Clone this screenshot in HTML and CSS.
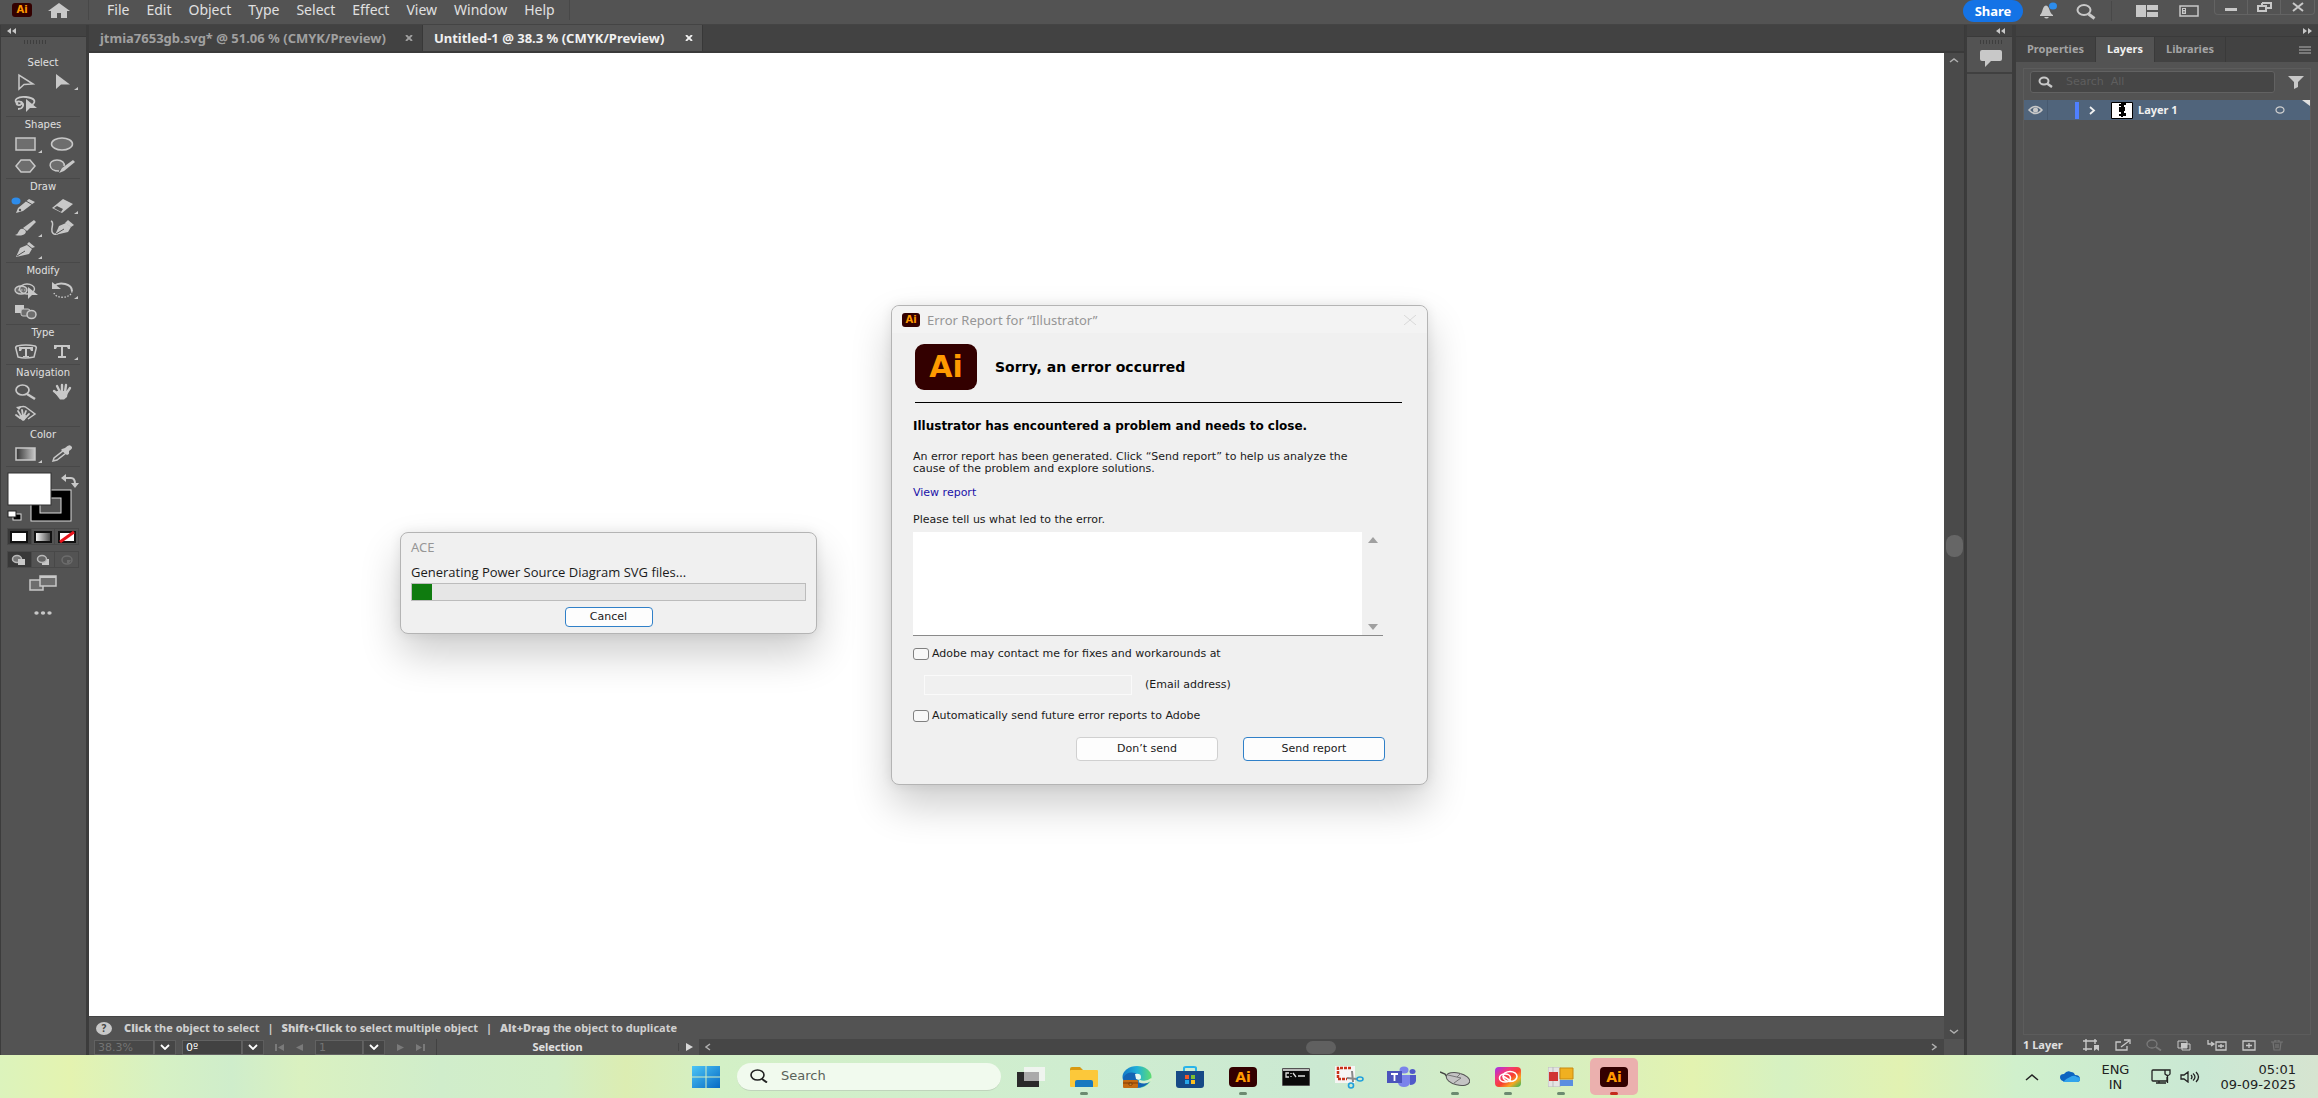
FILE: index.html
```html
<!DOCTYPE html>
<html lang="en">
<head>
<meta charset="utf-8">
<title>Adobe Illustrator</title>
<link rel="stylesheet" href="styles.css">
</head>
<body>
<div class="app">
  <header class="menubar">
    <span class="ai-badge ai-small">Ai</span>
    <button class="icon-btn home" aria-label="Home"><svg width="22" height="15" viewBox="0 0 22 15"><path d="M11 0 0 8h3v7h6v-5h4v5h6V8h3z" fill="#c8c8c8"/></svg></button>
    <nav class="menus">
      <button>File</button><button>Edit</button><button>Object</button><button>Type</button><button>Select</button><button>Effect</button><button>View</button><button>Window</button><button>Help</button>
    </nav>
    <div class="top-actions">
      <button class="share">Share</button>
      <button class="icon-btn" aria-label="Notifications"><svg width="22" height="18" viewBox="0 0 22 18"><path d="M2 13c3-2 2-9 6-9.500C12 4 11 11 15 13v1H2zM6 15h5q-2.500 3-5 0z" fill="#c8c8c8"/><ellipse cx="15" cy="4" rx="4" ry="3.500" fill="#2d8ceb"/></svg></button>
      <button class="icon-btn" aria-label="Search"><svg width="22" height="18" viewBox="0 0 22 18"><ellipse cx="9" cy="8" rx="6.500" ry="5" fill="none" stroke="#c8c8c8" stroke-width="2"/><path d="m13.500 12 6 4.500" stroke="#c8c8c8" stroke-width="3"/></svg></button>
      <span class="bar-line"></span>
      <button class="icon-btn ws" aria-label="Arrange documents"><svg width="22" height="12" viewBox="0 0 22 12"><path d="M0 0h10v12H0zM11 0h11v5H11zM11 7h11v5H11z" fill="#c8c8c8"/></svg></button>
      <button class="icon-btn ws" aria-label="Workspace"><svg width="20" height="12" viewBox="0 0 20 12"><path d="M1 1h18v10H1z" fill="none" stroke="#c8c8c8" stroke-width="1.500"/><path d="M3 3h4v6H3z" fill="#c8c8c8"/><path d="M4 4.500h2M4 7h2" stroke="#535353"/></svg></button>
      <div class="win-buttons">
        <button aria-label="Minimize"><svg width="14" height="10" viewBox="0 0 14 10"><path d="M1 6h12v3H1z" fill="#c8c8c8"/></svg></button>
        <button aria-label="Restore"><svg width="16" height="10" viewBox="0 0 16 10"><path d="M6 1h9v5h-4M6 3V1M2 4h8v5H2z" fill="none" stroke="#c8c8c8" stroke-width="2"/></svg></button>
        <button aria-label="Close"><svg width="14" height="10" viewBox="0 0 14 10"><path d="m2 1 10 8M12 1 2 9" stroke="#c8c8c8" stroke-width="2"/></svg></button>
      </div>
    </div>
  </header>

  <main class="workspace">
    <aside class="toolbar">
      <div class="dock-head"><svg width="10" height="6" viewBox="0 0 10 6"><path d="M4 0v6L0 3zM9 0v6L5 3z" fill="#c8c8c8"/></svg></div>
      <div class="tool-body">
        <div class="grip"></div>
        <section class="tools"><h2>Select</h2><div class="tool-grid">
          <button aria-label="Selection"><svg viewBox="0 0 34 20"><path d="M11 3v14l5-4.500 9-.5z" fill="none" stroke="#c8c8c8" stroke-width="1.500"/></svg></button>
          <button aria-label="Direct selection"><svg viewBox="0 0 34 20"><path d="M11 2v15l5-4.500h9z" fill="#c8c8c8"/><path d="M33 15v3h-4z" fill="#c8c8c8"/></svg></button>
          <button aria-label="Lasso"><svg viewBox="0 0 34 20"><path d="M10 10C4 6 10 2 18 3s11 4 6 8M13 8c-4-2-6 2-3 3s5-3 3-3c4 2 2 7-3 7" fill="none" stroke="#c8c8c8" stroke-width="1.800"/><path d="M18 5v13l4-4h7z" fill="#c8c8c8"/></svg></button>
        </div></section>
        <section class="tools"><h2>Shapes</h2><div class="tool-grid">
          <button aria-label="Rectangle"><svg viewBox="0 0 34 20"><path d="M8 4h19v12H8z" fill="#6e6e6e" stroke="#c8c8c8" stroke-width="1.500"/><path d="M34 16v3h-4z" fill="#c8c8c8"/></svg></button>
          <button aria-label="Ellipse"><svg viewBox="0 0 34 20"><ellipse cx="17" cy="10" rx="10.500" ry="6" fill="#6e6e6e" stroke="#c8c8c8" stroke-width="1.500"/></svg></button>
          <button aria-label="Polygon"><svg viewBox="0 0 34 20"><path d="M13 4h9l5 6-5 6h-9l-5-6z" fill="#6e6e6e" stroke="#c8c8c8" stroke-width="1.500"/></svg></button>
          <button aria-label="Shaper"><svg viewBox="0 0 34 20"><path d="M14 15C3 15 2 4 12 4c5 0 8 3 7 6" fill="#6e6e6e" stroke="#c8c8c8" stroke-width="1.500"/><path d="m14 17 3-5L28 4l2 2-11 9z" fill="#c8c8c8"/></svg></button>
        </div></section>
        <section class="tools"><h2>Draw</h2><div class="tool-grid">
          <button aria-label="Pencil"><svg viewBox="0 0 34 20"><path d="m8 17 2-5 11-9 6 3-12 9z" fill="#c8c8c8"/><path d="m18 5 6 3.500" stroke="#535353"/><circle cx="12" cy="14" r="1.200" fill="#535353"/><ellipse cx="8" cy="5" rx="4.500" ry="3.500" fill="#2d8ceb"/></svg></button>
          <button aria-label="Eraser"><svg viewBox="0 0 34 20"><path d="m7 12 11-9 10 5-11 9z" fill="#c8c8c8"/><path d="m9 12 3-2 6 3-2 3z" fill="#535353"/><path d="M33 15v3h-4z" fill="#c8c8c8"/></svg></button>
          <button aria-label="Paintbrush"><svg viewBox="0 0 34 20"><path d="m15 10 11-8 2 2-9 9z" fill="#c8c8c8"/><path d="M7 17q3-1 4-4 2-4 6-1c3 3-2 7-10 5z" fill="#c8c8c8"/><path d="M34 16v3h-4z" fill="#c8c8c8"/></svg></button>
          <button aria-label="Curvature"><svg viewBox="0 0 34 20"><path d="M6 3c5 2-3 10 3 13q3 1 4-1" fill="none" stroke="#c8c8c8" stroke-width="1.500"/><path d="m10 17 4-9 7-3 5 4-3 5z" fill="#c8c8c8"/><path d="m23 2 6 5-3 2-6-4z" fill="#c8c8c8"/><path d="m11 16 8-5" stroke="#535353"/></svg></button>
          <button aria-label="Pen"><svg viewBox="0 0 34 20"><path d="m8 17 4-9 7-3 5 4-3 5z" fill="#c8c8c8"/><path d="m21 2 6 5-3 1-5-4z" fill="#c8c8c8"/><path d="m9 16 8-5" stroke="#535353"/><path d="M34 16v3h-4z" fill="#c8c8c8"/></svg></button>
        </div></section>
        <section class="tools"><h2>Modify</h2><div class="tool-grid">
          <button aria-label="Shape builder"><svg viewBox="0 0 34 20"><ellipse cx="13" cy="10" rx="6" ry="4" fill="#6e6e6e" stroke="#c8c8c8" stroke-width="1.400"/><ellipse cx="19" cy="9" rx="7.500" ry="5" fill="none" stroke="#c8c8c8" stroke-width="1.400"/><path d="M10 10h9" stroke="#c8c8c8" stroke-dasharray="1.500"/><path d="M20 7v12l4-4h6z" fill="#c8c8c8"/></svg></button>
          <button aria-label="Rotate"><svg viewBox="0 0 34 20"><path d="M9 6c6-5 18-2 18 5" fill="none" stroke="#c8c8c8" stroke-width="2"/><path d="M7 2v7h9z" fill="#c8c8c8"/><path d="M27 11c-1 8-16 8-18 2" fill="none" stroke="#c8c8c8" stroke-width="1.400" stroke-dasharray="1.500"/><path d="M33 16v3h-4z" fill="#c8c8c8"/></svg></button>
          <button aria-label="Blend"><svg viewBox="0 0 34 20"><path d="M7 3h9v8H7z" fill="#c8c8c8"/><rect x="13" y="7" width="9" height="7" rx="2" fill="#6e6e6e" stroke="#c8c8c8"/><ellipse cx="23.500" cy="12.500" rx="4.500" ry="4" fill="#6e6e6e" stroke="#c8c8c8" stroke-width="1.500"/></svg></button>
        </div></section>
        <section class="tools"><h2>Type</h2><div class="tool-grid">
          <button aria-label="Touch type"><svg viewBox="0 0 34 20"><path d="M9 4q9-2 18 0 2 1 1 3l-2 8q-9 2-16 0L8 7q-1-2 1-3z" fill="none" stroke="#c8c8c8" stroke-width="1.500"/><path d="M11 5h14v4h-2l-1-2h-3v7h2v1h-6v-1h2V7h-3l-1 2h-2z" fill="#c8c8c8"/></svg></button>
          <button aria-label="Type"><svg viewBox="0 0 34 20"><path d="M9 3h16v4h-2l-1-2h-4v9h3v2h-8v-2h3V5h-4l-1 2H9z" fill="#c8c8c8"/><path d="M33 15v3h-4z" fill="#c8c8c8"/></svg></button>
        </div></section>
        <section class="tools"><h2>Navigation</h2><div class="tool-grid">
          <button aria-label="Zoom"><svg viewBox="0 0 34 20"><ellipse cx="14.500" cy="8" rx="6.500" ry="5" fill="none" stroke="#c8c8c8" stroke-width="1.700"/><path d="m19 12 8 5" stroke="#c8c8c8" stroke-width="2.500"/></svg></button>
          <button aria-label="Hand"><svg viewBox="0 0 34 20"><path d="m9 9 5 4M12 4l3 6M17 3v7M21 3l-1 7M25 6l-4 6" stroke="#c8c8c8" stroke-width="2.400" stroke-linecap="round"/><path d="M12 9h11l-1 6-3 2.500h-4L10 11z" fill="#c8c8c8"/></svg></button>
          <button aria-label="Rotate view"><svg viewBox="0 0 34 20"><path d="m8 11 4 3M10 7l3 5M14 6l1 6M18 7l-2 5M21 10l-4 4" stroke="#c8c8c8" stroke-width="1.800" stroke-linecap="round"/><path d="M12 11h6l-1 5-2 1-4-3zM8 3l6-1-3 4z" fill="#c8c8c8"/><path d="M10 4q6-3 9 0l8 6-7 5" fill="none" stroke="#c8c8c8" stroke-width="1.500"/></svg></button>
        </div></section>
        <section class="tools"><h2>Color</h2><div class="tool-grid">
          <button aria-label="Gradient"><svg viewBox="0 0 34 20"><defs><linearGradient id="g1"><stop stop-color="#333"/><stop offset="1" stop-color="#c8c8c8"/></linearGradient></defs><path d="M8 4h19v12H8z" fill="url(#g1)" stroke="#c8c8c8" stroke-width="1.500"/><path d="M34 16v3h-4z" fill="#c8c8c8"/></svg></button>
          <button aria-label="Eyedropper"><svg viewBox="0 0 34 20"><path d="m8 17 1-3 9-7 3 2-9 7z" fill="none" stroke="#c8c8c8" stroke-width="1.500"/><path d="m17 5 3-1q4-4 6-2 3 2-2 5v3l-2 1-6-5z" fill="#c8c8c8"/></svg></button>
        </div></section>
        <section class="swatches">
          <svg width="74" height="52" viewBox="0 0 74 52"><rect x="24" y="18" width="40" height="31" fill="#000" stroke="#ddd"/><rect x="33" y="26" width="21" height="15" fill="#535353" stroke="#ddd"/><rect x="1" y="1" width="43" height="32" fill="#fff" stroke="#333"/><path d="M58 6h6q4 0 4 6" fill="none" stroke="#c8c8c8" stroke-width="2"/><path d="M54 6l5-4v8zM64 11h8l-4 5z" fill="#c8c8c8"/><rect x="6" y="42" width="8" height="6" fill="#000" stroke="#ddd"/><rect x="1" y="39" width="8" height="6" fill="#fff" stroke="#222"/></svg>
        </section>
        <div class="seg">
          <button class="on" aria-label="Color"><svg width="18" height="12" viewBox="0 0 18 12"><path d="M1 1h16v10H1z" fill="#fff" stroke="#111" stroke-width="2"/></svg></button>
          <button aria-label="Gradient fill"><svg width="18" height="12" viewBox="0 0 18 12"><defs><linearGradient id="g2"><stop stop-color="#fff"/><stop offset="1" stop-color="#444"/></linearGradient></defs><path d="M1 1h16v10H1z" fill="url(#g2)" stroke="#111" stroke-width="2"/></svg></button>
          <button aria-label="None"><svg width="18" height="12" viewBox="0 0 18 12"><path d="M1 1h16v10H1z" fill="#fff" stroke="#111" stroke-width="2"/><path d="M2 11 16 1" stroke="#e8141c" stroke-width="3"/></svg></button>
        </div>
        <div class="seg">
          <button class="on" aria-label="Draw normal"><svg width="16" height="12" viewBox="0 0 16 12"><ellipse cx="6" cy="5" rx="4.500" ry="3.500" fill="#777" stroke="#b8b8b8" stroke-width="1.500"/><path d="M7 5h7v6H7z" fill="#c8c8c8"/></svg></button>
          <button aria-label="Draw behind"><svg width="16" height="12" viewBox="0 0 16 12"><path d="M7 5h7v6H7z" fill="#c8c8c8"/><ellipse cx="7" cy="5" rx="4.500" ry="3.500" fill="#666" stroke="#b8b8b8" stroke-width="1.500"/></svg></button>
          <button aria-label="Draw inside"><svg width="16" height="12" viewBox="0 0 16 12"><ellipse cx="8" cy="6" rx="5" ry="4" fill="none" stroke="#6c6c6c" stroke-width="1.500"/><path d="M8 6h4l-2 3H8z" fill="#6c6c6c"/></svg></button>
        </div>
        <button class="icon-btn screen-mode" aria-label="Screen mode"><svg width="28" height="16" viewBox="0 0 28 16"><path d="M1 5h13v10H1z" fill="#6e6e6e" stroke="#c8c8c8" stroke-width="1.500"/><path d="M11 1h16v10H11z" fill="#6e6e6e" stroke="#c8c8c8" stroke-width="1.500"/><path d="M11 2h16" stroke="#c8c8c8" stroke-width="2"/></svg></button>
        <button class="icon-btn more" aria-label="Edit toolbar"><svg width="18" height="4" viewBox="0 0 18 4"><g fill="#c8c8c8"><ellipse cx="2.500" cy="2" rx="2.200" ry="1.700"/><ellipse cx="9" cy="2" rx="2.200" ry="1.700"/><ellipse cx="15.500" cy="2" rx="2.200" ry="1.700"/></g></svg></button>
      </div>
    </aside>

    <section class="document">
      <div class="tabs">
        <div class="tab"><span>jtmia7653gb.svg* @ 51.06 % (CMYK/Preview)</span><button aria-label="Close tab"><svg width="8" height="6" viewBox="0 0 8 6"><path d="m1 0 6 6M7 0 1 6" stroke="currentColor" stroke-width="1.800"/></svg></button></div>
        <div class="tab active"><span>Untitled-1 @ 38.3 % (CMYK/Preview)</span><button aria-label="Close tab"><svg width="8" height="6" viewBox="0 0 8 6"><path d="m1 0 6 6M7 0 1 6" stroke="currentColor" stroke-width="1.800"/></svg></button></div>
      </div>
      <div class="doc-body">
        <div class="canvas">
          <section class="dialog ace">
            <h1>ACE</h1>
            <p>Generating Power Source Diagram SVG files...</p>
            <div class="progress" role="progressbar" aria-label="Generating" aria-valuenow="5"><div class="progress-fill" style="width:5%"></div></div>
            <button class="btn primary cancel">Cancel</button>
          </section>
          <section class="dialog report">
            <div class="title"><span class="ai-badge ai-mini">Ai</span><h1>Error Report for “Illustrator”</h1><button class="icon-btn" aria-label="Close"><svg width="14" height="10" viewBox="0 0 14 10"><path d="m1 0 12 10M13 0 1 10" stroke="#d8d8d8"/></svg></button></div>
            <div class="report-body">
              <div class="report-head"><span class="ai-badge ai-large">Ai</span><h2>Sorry, an error occurred</h2></div>
              <h3>Illustrator has encountered a problem and needs to close.</h3>
              <p>An error report has been generated. Click “Send report” to help us analyze the<br>cause of the problem and explore solutions.</p>
              <a href="#report">View report</a>
              <label class="area-label" for="cause">Please tell us what led to the error.</label>
              <div class="area"><textarea id="cause"></textarea><div class="area-bar"><svg width="10" height="6" viewBox="0 0 10 6"><path d="M5 0l5 6H0z" fill="#a0a0a0"/></svg><svg width="10" height="6" viewBox="0 0 10 6"><path d="M5 6l5-6H0z" fill="#a0a0a0"/></svg></div></div>
              <div class="check"><input type="checkbox" id="contact"><label for="contact">Adobe may contact me for fixes and workarounds at</label></div>
              <div class="email"><input type="text" id="email" disabled><label for="email">(Email address)</label></div>
              <div class="check"><input type="checkbox" id="auto"><label for="auto">Automatically send future error reports to Adobe</label></div>
              <div class="actions"><button class="btn">Don’t send</button><button class="btn primary">Send report</button></div>
            </div>
          </section>
        </div>
        <div class="vscroll">
          <svg width="10" height="5" viewBox="0 0 10 5"><path d="m1 4 4-3 4 3" fill="none" stroke="#b0b0b0" stroke-width="1.500"/></svg>
          <span class="vthumb"></span>
          <svg width="10" height="5" viewBox="0 0 10 5"><path d="m1 1 4 3 4-3" fill="none" stroke="#b0b0b0" stroke-width="1.500"/></svg>
        </div>
        <div class="hint"><span class="help">?</span><span><b>Click</b> the object to select</span><i>|</i><span><b>Shift+Click</b> to select multiple object</span><i>|</i><span><b>Alt+Drag</b> the object to duplicate</span></div>
      </div>
      <div class="docbar">
        <input class="field w-zoom" type="text" value="38.3%" aria-label="Zoom" disabled>
        <button class="drop" aria-label="Zoom levels"><svg width="10" height="6" viewBox="0 0 10 6"><path d="m1 1 4 4 4-4" fill="none" stroke="#fff" stroke-width="1.800"/></svg></button>
        <input class="field w-zoom lit" type="text" value="0º" aria-label="Rotation">
        <button class="drop" aria-label="Rotation angles"><svg width="10" height="6" viewBox="0 0 10 6"><path d="m1 1 4 4 4-4" fill="none" stroke="#fff" stroke-width="1.800"/></svg></button>
        <span class="nav"><svg width="10" height="7" viewBox="0 0 10 7"><path d="M0 0h2v7H0zM9 0v7L3 3.500z" fill="#7a7a7a"/></svg><svg width="8" height="7" viewBox="0 0 8 7"><path d="M7 0v7L0 3.500z" fill="#7a7a7a"/></svg></span>
        <input class="field w-board" type="text" value="1" aria-label="Artboard" disabled>
        <button class="drop" aria-label="Artboards"><svg width="10" height="6" viewBox="0 0 10 6"><path d="m1 1 4 4 4-4" fill="none" stroke="#fff" stroke-width="1.800"/></svg></button>
        <span class="nav"><svg width="8" height="7" viewBox="0 0 8 7"><path d="M1 0v7l7-3.500z" fill="#7a7a7a"/></svg><svg width="10" height="7" viewBox="0 0 10 7"><path d="M8 0h2v7H8zM1 0v7l6-3.500z" fill="#7a7a7a"/></svg></span>
        <span class="mode">Selection</span>
        <button class="play" aria-label="Status options"><svg width="7" height="8" viewBox="0 0 7 8"><path d="M0 0v8l7-4z" fill="#d8d8d8"/></svg></button>
        <div class="hscroll">
          <svg width="6" height="8" viewBox="0 0 6 8"><path d="M5 1 1 4l4 3" fill="none" stroke="#b0b0b0" stroke-width="1.500"/></svg>
          <span class="hthumb"></span>
          <svg width="6" height="8" viewBox="0 0 6 8"><path d="m1 1 4 3-4 3" fill="none" stroke="#b0b0b0" stroke-width="1.500"/></svg>
        </div>
      </div>
    </section>

    <aside class="dock">
      <div class="dock-head end"><svg width="10" height="6" viewBox="0 0 10 6"><path d="M4 0v6L0 3zM9 0v6L5 3z" fill="#c8c8c8"/></svg></div>
      <div class="dock-item"><div class="grip"></div><button class="icon-btn" aria-label="Comments"><svg width="22" height="17" viewBox="0 0 22 17"><path d="M2 0h18q2 0 2 2v7q0 2-2 2h-9l-6 6v-6H2q-2 0-2-2V2q0-2 2-2z" fill="#c8c8c8"/></svg></button></div>
    </aside>

    <aside class="panel">
      <div class="dock-head end"><svg width="10" height="6" viewBox="0 0 10 6"><path d="M1 0v6l4-3zM6 0v6l4-3z" fill="#c8c8c8"/></svg></div>
      <div class="panel-tabs"><button>Properties</button><button class="active">Layers</button><button>Libraries</button><button class="burger" aria-label="Panel menu"><svg width="12" height="8" viewBox="0 0 12 8"><path d="M0 1h12M0 4h12M0 7h12" stroke="#b4b4b4"/></svg></button></div>
      <div class="layers">
        <div class="layer-search"><div class="search-box"><svg width="16" height="12" viewBox="0 0 16 12"><ellipse cx="6" cy="5" rx="4.500" ry="3.500" fill="none" stroke="#c8c8c8" stroke-width="2"/><path d="m9 7.500 5 3.500" stroke="#c8c8c8" stroke-width="2.500"/></svg><input type="text" placeholder="Search  All" aria-label="Search layers"></div><button class="icon-btn" aria-label="Filter"><svg width="16" height="13" viewBox="0 0 16 13"><path d="M0 0h16L10 6v5l-4 2V6z" fill="#c8c8c8"/></svg></button></div>
        <div class="layer-row">
          <svg class="eye" width="15" height="10" viewBox="0 0 15 10"><path d="M1 5q6.500-7 13 0-6.500 7-13 0z" fill="none" stroke="#c8c8c8" stroke-width="1.600"/><circle cx="7.500" cy="5" r="2.500" fill="#c8c8c8"/></svg>
          <span class="lock"></span><span class="color-bar"></span>
          <svg class="chev" width="7" height="9" viewBox="0 0 7 9"><path d="m1 1 4 3.500L1 8" fill="none" stroke="#f0f0f0" stroke-width="1.800"/></svg>
          <svg class="thumb" width="22" height="17" viewBox="0 0 22 17"><path d="M.5.500h21v16H.5z" fill="#fff" stroke="#000"/><path d="M10 1h5v2h-2v2h1v4h-1v2h2v3h-3v1h-2v-1H8v-2h2v-2H8V5h2V4H8V2h2z" fill="#000"/></svg>
          <span class="layer-name">Layer 1</span>
          <svg class="target" width="10" height="8" viewBox="0 0 10 8"><ellipse cx="5" cy="4" rx="4" ry="3.200" fill="none" stroke="#d0d0d0" stroke-width="1.200"/></svg>
          <svg class="corner" width="8" height="6" viewBox="0 0 8 6"><path d="M0 0h8v6z" fill="#e0e0e0"/></svg>
        </div>
      </div>
      <div class="layer-foot">
        <span>1 Layer</span>
        <button class="icon-btn" aria-label="Collect for export"><svg width="17" height="12" viewBox="0 0 17 12"><path d="M0 2h14M0 10h9M3 0v12M12 0v5" stroke="#c8c8c8" stroke-width="1.400"/><path d="M11 6h5v6l-2.500-2-2.500 2z" fill="#c8c8c8"/></svg></button>
        <button class="icon-btn" aria-label="Export"><svg width="16" height="12" viewBox="0 0 16 12"><path d="M6 3H1v8h11V7M6 8l8-6M9 1h6v4" fill="none" stroke="#c8c8c8" stroke-width="1.300"/></svg></button>
        <button class="icon-btn" aria-label="Locate object"><svg width="16" height="12" viewBox="0 0 16 12"><ellipse cx="6" cy="5" rx="5" ry="4" fill="none" stroke="#7a7a7a" stroke-width="1.300"/><path d="m10 8 5 3.500" stroke="#7a7a7a" stroke-width="1.800"/></svg></button>
        <button class="icon-btn" aria-label="Clipping mask"><svg width="14" height="11" viewBox="0 0 14 11"><path d="M1 1h9v7H1zM5 4h8v6H5z" fill="none" stroke="#c8c8c8"/><path d="M4 3h6v5H4z" fill="#c8c8c8"/></svg></button>
        <button class="icon-btn" aria-label="New sublayer"><svg width="20" height="11" viewBox="0 0 20 11"><path d="M1 0v4h5M4 2l3 2-3 2M9 2h10v8H9zM11 6h6M14 4v4" fill="none" stroke="#c8c8c8" stroke-width="1.300"/></svg></button>
        <button class="icon-btn" aria-label="New layer"><svg width="14" height="11" viewBox="0 0 14 11"><path d="M1 1h12v9H1zM4 5.500h6M7 3v5" fill="none" stroke="#c8c8c8" stroke-width="1.300"/></svg></button>
        <button class="icon-btn" aria-label="Delete"><svg width="12" height="11" viewBox="0 0 12 11"><path d="M0 2h12M4 2V0h4v2M2 2l1 8h6l1-8M5 4v4M7 4v4" fill="none" stroke="#747474" stroke-width="1.200"/></svg></button>
      </div>
    </aside>
  </main>

  <footer class="taskbar">
    <div class="task-center">
      <button class="task start" aria-label="Start"><svg width="28" height="22" viewBox="0 0 28 22"><defs><linearGradient id="w" x2="1" y2="1"><stop stop-color="#4cc6f6"/><stop offset="1" stop-color="#0669c4"/></linearGradient></defs><path d="M0 0h13.500v10.500H0zM14.500 0H28v10.500H14.500zM0 11.500h13.500V22H0zM14.500 11.500H28V22H14.500z" fill="url(#w)"/></svg></button>
      <label class="task-search"><svg width="18" height="14" viewBox="0 0 18 14"><ellipse cx="7.500" cy="6" rx="6.500" ry="5" fill="none" stroke="#222" stroke-width="1.600"/><path d="m12 10 5 3.500" stroke="#222" stroke-width="2"/></svg><input type="text" placeholder="Search" aria-label="Search Windows"></label>
      <button class="task" aria-label="Task view"><svg width="30" height="22" viewBox="0 0 30 22"><path d="M1 6h22v15H1z" fill="#2a2a2a"/><path d="M8 1h21v14H8z" fill="#f4f4f4" opacity=".85"/><path d="M8 6h15v9H8z" fill="#aaa"/></svg></button>
      <button class="task run" aria-label="File Explorer"><svg width="30" height="22" viewBox="0 0 30 22"><path d="M1 3q0-2 2-2h8l3 3v4H1z" fill="#d99a12"/><rect x="1" y="4" width="28" height="17" rx="1" fill="#fcc83a"/><path d="M6 21v-5q0-2 2-2h14q2 0 2 2v5z" fill="#1879c0"/></svg></button>
      <button class="task" aria-label="Edge"><svg width="30" height="24" viewBox="0 0 30 24"><defs><linearGradient id="e"><stop stop-color="#1277c8"/><stop offset=".5" stop-color="#20b0d8"/><stop offset="1" stop-color="#5fdc70"/></linearGradient></defs><ellipse cx="15" cy="12" rx="14.500" ry="11" fill="url(#e)"/><path d="M1 13Q5 6 13 8q3 1 2 5 0 4 7 5 4 0 6-2-5 7-14 7Q2 22 1 13z" fill="#1464b4"/><path d="M13 9q6-1 6 3t-5 2z" fill="#e8f8f0"/><path d="M17 16q7 3 13-2" fill="none" stroke="#d4efce" stroke-width="2.500"/><rect x="1" y="15" width="15" height="8" rx="1" fill="#c46a10"/><path d="M1 18h15M7 18h3v2H7z" stroke="#7d3b04" fill="#ffd060"/></svg></button>
      <button class="task" aria-label="Store"><svg width="28" height="22" viewBox="0 0 28 22"><path d="M8 5V2q0-1 2-1h8q2 0 2 1v3" fill="none" stroke="#28b4ea" stroke-width="2"/><path d="M0 5h28v14q0 3-3 3H3q-3 0-3-3z" fill="#164a86"/><path d="M9 9h4v4H9z" fill="#f05a28"/><path d="M15 9h4v4h-4z" fill="#80c030"/><path d="M9 14h4v4H9z" fill="#28a8e8"/><path d="M15 14h4v4h-4z" fill="#fcc020"/></svg></button>
      <button class="task run" aria-label="Illustrator"><span class="ai-badge ai-task">Ai</span></button>
      <button class="task" aria-label="Command Prompt"><svg width="28" height="18" viewBox="0 0 28 18"><path d="M0 0h28v18H0z" fill="#0a0a0a" stroke="#999"/><path d="M1 1h26v2H1z" fill="#bbb"/><path d="M7 5H4v4h3M9 5v1M9 8v1M11 5l3 4M16 8h7" fill="none" stroke="#ddd" stroke-width="1.300"/></svg></button>
      <button class="task" aria-label="Snipping Tool"><svg width="30" height="24" viewBox="0 0 30 24"><path d="M1 1h20v17H1z" fill="#f6f4f4"/><path d="M17 3H4v11h9" fill="none" stroke="#c83018" stroke-width="2.500" stroke-dasharray="3 1"/><path d="m18 6 1 11M13 13l10 1" stroke="#888" stroke-width="2"/><ellipse cx="26" cy="14" rx="3" ry="2" fill="none" stroke="#20a0dc" stroke-width="1.600"/><ellipse cx="17" cy="20.500" rx="2.500" ry="2.500" fill="none" stroke="#20a0dc" stroke-width="1.600"/></svg></button>
      <button class="task" aria-label="Teams"><svg width="30" height="22" viewBox="0 0 30 22"><ellipse cx="25.500" cy="5.500" rx="3" ry="2.500" fill="#5059c9"/><path d="M21 9h8v6q-1 4-6 4z" fill="#5059c9"/><ellipse cx="17" cy="4" rx="4.500" ry="3.500" fill="#7b83eb"/><path d="M11 9h12v8q-1 4-6 4t-6-4z" fill="#7b83eb"/><path d="M0 5h15v12H0z" fill="#4b53bc"/><path d="M4 8h7M7.500 8v7" stroke="#fff" stroke-width="1.800"/></svg></button>
      <button class="task run" aria-label="Mouse"><svg width="30" height="22" viewBox="0 0 30 22"><path d="m0 6 5 2 3 4" fill="none" stroke="#444" stroke-width="1.500"/><ellipse cx="18" cy="13" rx="12" ry="6" transform="rotate(14 18 13)" fill="#c4c4c4" stroke="#555"/><path d="m8 9 13 3-7 5M17 11l4-4" fill="none" stroke="#777"/></svg></button>
      <button class="task run" aria-label="Creative Cloud"><svg width="26" height="20" viewBox="0 0 26 20"><defs><linearGradient id="c" x2="1" y2="1"><stop stop-color="#a030f0"/><stop offset=".3" stop-color="#f03880"/><stop offset=".55" stop-color="#f84030"/><stop offset=".75" stop-color="#f8a820"/><stop offset="1" stop-color="#20b860"/></linearGradient></defs><rect width="26" height="20" rx="4" fill="url(#c)"/><g fill="none" stroke="#fff" stroke-width="1.600"><ellipse cx="10" cy="11" rx="5.500" ry="4"/><ellipse cx="15" cy="9.500" rx="7" ry="5"/><path d="m8 9 8 5"/></g></svg></button>
      <button class="task run" aria-label="Forms"><svg width="26" height="20" viewBox="0 0 26 20"><path d="M0 0h12v20H0z" fill="#e4e4e4" stroke="#bbb"/><path d="M1 5h9v9H1z" fill="#d03434"/><path d="M12 1h13v11H12z" fill="#f0b020" stroke="#c88a10"/><path d="M12 13h13v6H12z" fill="#5a8ee0"/><path d="M5 0v5M5 14v6" stroke="#bbb"/></svg></button>
      <button class="task run current" aria-label="Illustrator, error report"><span class="ai-badge ai-task">Ai</span></button>
    </div>
    <div class="tray">
      <button class="icon-btn" aria-label="Show hidden icons"><svg width="14" height="8" viewBox="0 0 14 8"><path d="m1 7 6-5 6 5" fill="none" stroke="#222" stroke-width="1.500"/></svg></button>
      <button class="icon-btn cloud" aria-label="OneDrive"><svg width="20" height="11" viewBox="0 0 20 11"><path d="M3 10q-3-1-3-4t4-3q3-4 7-2 3 0 4 3 5 0 5 4 0 3-3 3H4z" fill="#0c63c0"/><path d="M3 11q4-4 9-6 3-1 5 1 3 0 3 2 0 3-3 3z" fill="#32a4ec"/></svg></button>
      <span class="lang">ENG<br>IN</span>
      <svg width="20" height="15" viewBox="0 0 20 15"><path d="M14 1H2Q1 1 1 2v9q0 1 1 1h14V8M5 14h10M8 12v2M14 1h5v4q-2 3-5 0zM16.500 6v8" fill="none" stroke="#222" stroke-width="1.300"/></svg>
      <svg class="vol" width="20" height="12" viewBox="0 0 20 12"><path d="M1 4h3l4-3v10L4 8H1zM11 4q2 2 0 4M13 2.500q4 3.500 0 7M16 1q5 5 0 10" fill="none" stroke="#222" stroke-width="1.300"/></svg>
      <span class="clock">05:01<br>09-09-2025</span>
    </div>
  </footer>
</div>
</body>
</html>
```
FILE: styles.css
```css
* { box-sizing: border-box; }
html, body { height: 100%; margin: 0; }
body { font: 11px/14px "DejaVu Sans", Verdana, sans-serif; background: #535353; color: #e0e0e0; overflow: hidden; }
button, input, textarea { font: inherit; color: inherit; margin: 0; padding: 0; border: 0; background: none; border-radius: 0; }
h1, h2, h3, p { margin: 0; font-size: inherit; font-weight: inherit; }
svg { display: block; flex: none; }
i { font-style: normal; }
.icon-btn { display: flex; align-items: center; justify-content: center; }

.app { height: 100%; display: flex; flex-direction: column; }

.ai-badge { display: flex; align-items: center; justify-content: center; flex: none; background: #300; color: #ff9a00; font-weight: bold; border-radius: 3px; }
.ai-small { width: 20px; height: 14px; font-size: 10px; line-height: 12px; }
.ai-mini { width: 18px; height: 14px; font-size: 10px; line-height: 12px; }
.ai-large { width: 62px; height: 46px; font-size: 30px; line-height: 42px; border-radius: 9px; }
.ai-task { width: 28px; height: 20px; font-size: 14px; line-height: 18px; border-radius: 4px; }

/* menu bar */
.menubar { flex: none; height: 25px; display: flex; align-items: flex-start; padding-left: 12px; border-bottom: 1px solid #444; }
.menubar > .ai-small { margin-top: 3px; }
.home { margin: 3px 0 0 16px; }
.menus { display: flex; margin-left: 18px; border-left: 1px solid #484848; border-right: 1px solid #484848; padding: 0 6px 0 9px; height: 20px; }
.menus button { padding: 0 8px 0 9px; font: 14px/18px "Noto Sans", sans-serif; }
.top-actions { display: flex; align-items: center; margin-left: auto; height: 22px; }
.share { width: 60px; height: 22px; border-radius: 11px; background: #1473e6; color: #fff; font: bold 13px/22px "Noto Sans", sans-serif; margin-right: 15px; }
.top-actions .icon-btn + .icon-btn { margin-left: 15px; }
.top-actions .ws + .ws { margin-left: 21px; }
.bar-line { width: 1px; height: 20px; background: #484848; margin: 0 24px 0 14px; }
.win-buttons { display: flex; margin-left: 15px; height: 15px; align-self: flex-start; border: 1px solid #636363; border-top: 0; border-radius: 0 0 4px 4px; margin-right: 3px; }
.win-buttons button { width: 33px; display: flex; justify-content: center; align-items: center; border-right: 1px solid #636363; }
.win-buttons button:last-child { border: 0; }

.workspace { flex: 1; min-height: 0; display: flex; }
.dock-head { height: 12px; flex: none; background: #424242; display: flex; align-items: center; padding: 0 6px; border-bottom: 1px solid #3a3a3a; }
.dock-head.end { justify-content: flex-end; }
.grip { width: 24px; height: 4px; background: repeating-linear-gradient(90deg, #3e3e3e 0 1px, #535353 1px 3px); }

/* tool panel */
.toolbar { width: 89px; flex: none; display: flex; flex-direction: column; border-right: 3px solid #3c3c3c; border-left: 1px solid #3c3c3c; }
.tool-body { padding: 3px 6px 0 5px; }
.tool-body > .grip { margin: 0 auto 11px 18px; }
.tools { border-bottom: 1px solid #484848; padding-bottom: 1px; }
.tools h2 { height: 16px; text-align: center; font-size: 10px; line-height: 16px; }
.tool-grid { display: grid; grid-template-columns: 1fr 1fr; grid-auto-rows: 22px; }
.tool-grid button { display: flex; align-items: center; justify-content: center; }
.tool-grid svg { width: 34px; height: 20px; }
.swatches { padding: 5px 0 0 1px; height: 61px; }
.seg { display: flex; height: 17px; margin: 0 0 6px 1px; border: 1px solid #484848; width: 72px; }
.seg button { flex: 1; display: flex; align-items: center; justify-content: center; border-right: 1px solid #484848; }
.seg button:last-child { border: 0; }
.seg .on { background: #383838; }
.screen-mode { margin: 7px auto 0; }
.more { margin: 20px auto 0; }

/* document */
.document { flex: 1; min-width: 0; display: flex; flex-direction: column; border-right: 1px solid #3a3a3a; }
.tabs { height: 28px; flex: none; background: #424242; border-bottom: 2px solid #3a3a3a; display: flex; font: bold 13px/26px "Noto Sans", sans-serif; color: #a0a0a0; }
.tab { display: flex; align-items: center; justify-content: space-between; min-width: 280px; padding: 0 9px 0 11px; gap: 19px; border-right: 1px solid #383838; }
.tab.active { background: #535353; color: #f0f0f0; }
.doc-body { flex: 1; min-height: 0; display: grid; grid-template-columns: 1fr 20px; grid-template-rows: 1fr 23px; }
.canvas { background: #fff; position: relative; overflow: hidden; }
.vscroll { grid-column: 2; grid-row: 1 / 3; background: #4a4a4a; display: flex; flex-direction: column; align-items: center; justify-content: space-between; padding: 5px 0; }
.vthumb { width: 17px; height: 22px; border-radius: 8px; background: #666; }
.hint { grid-column: 1; grid-row: 2; display: flex; align-items: center; gap: 8px; padding-left: 7px; color: #d0d0d0; border-top: 1px solid #444; font: bold 11px/14px "Noto Sans", sans-serif; }
.help { width: 16px; height: 13px; border-radius: 50%; background: #c8c8c8; color: #444; font-size: 10px; line-height: 13px; text-align: center; margin-right: 4px; }
.docbar { flex: none; height: 16px; display: flex; align-items: center; padding-left: 5px; }
.field { height: 15px; background: #484848; border: 1px solid #626262; color: #747474; padding: 0 3px; font-size: 11px; line-height: 13px; }
.field.lit { background: #424242; color: #fff; margin-left: 6px; }
.w-zoom { width: 60px; }
.w-board { width: 48px; }
.drop { width: 22px; height: 15px; background: #464646; border: 1px solid #5e5e5e; display: flex; align-items: center; justify-content: center; }
.nav { display: flex; gap: 11px; padding: 0 11px; }
.mode { width: 242px; border-left: 1px solid #424242; text-align: center; font: bold 11px/16px "Noto Sans", sans-serif; }
.play { width: 21px; padding-left: 7px; border-left: 1px solid #444; }
.hscroll { flex: 1; height: 100%; background: #464646; display: flex; align-items: center; justify-content: space-between; padding: 0 7px 0 6px; margin-right: 20px; }
.hthumb { width: 30px; height: 13px; border-radius: 7px; background: #606060; }

/* dialogs float over the canvas */
.dialog { position: absolute; background: #f0f0f0; color: #1a1a1a; border: 1px solid #b4b4b4; border-radius: 8px; box-shadow: 0 20px 40px rgba(0,0,0,.2), 0 0 12px rgba(0,0,0,.08); }
.dialog h1 { color: #969696; font: 13px/16px "Noto Sans", sans-serif; }
.btn { background: #fdfdfd; border: 1px solid #d0d0d0; border-radius: 4px; }
.btn.primary { border-color: #3080c8; }
.ace { left: 311px; top: 479px; width: 417px; height: 102px; padding: 6px 10px; }
.ace p { font: 13px/16px "Open Sans", sans-serif; margin: 9px 0 3px; }
.progress { height: 18px; border: 1px solid #bcbcbc; background: #e6e6e6; }
.progress-fill { height: 100%; background: #0f7b0f; }
.cancel { display: block; width: 88px; height: 20px; margin: 6px auto 0; }
.report { left: 802px; top: 252px; width: 537px; height: 480px; }
.title { height: 27px; display: flex; align-items: center; padding: 0 10px; background: #f3f3f3; border-radius: 8px 8px 0 0; }
.title h1 { margin-left: 7px; flex: 1; }
.report-body { padding: 11px 25px 0 21px; }
.report-head { display: flex; align-items: center; gap: 18px; margin-left: 2px; padding-bottom: 12px; border-bottom: 1px solid #000; }
.report-head h2 { font-size: 14px; line-height: 18px; font-weight: bold; color: #000; }
.report h3 { font-size: 12px; line-height: 14px; font-weight: bold; color: #000; margin: 16px 0 18px; }
.report p { line-height: 12px; margin-bottom: 11px; }
.report a { display: block; color: #1a12a8; text-decoration: none; margin-bottom: 13px; }
.area-label { display: block; margin-bottom: 5px; }
.area { display: flex; width: 470px; height: 104px; border-bottom: 1px solid #8a8a8a; background: #fff; margin-bottom: 11px; }
.area textarea { flex: 1; resize: none; outline: 0; }
.area-bar { width: 21px; display: flex; flex-direction: column; justify-content: space-between; align-items: center; padding: 5px 0; background: #f0f0f0; }
.check { display: flex; align-items: center; height: 14px; }
.check input { appearance: none; width: 16px; height: 12px; border: 1px solid #808080; border-radius: 3px; background: #f8f8f8; margin-right: 3px; }
.email { display: flex; align-items: center; gap: 13px; height: 20px; margin: 14px 0 14px 11px; }
.email input { width: 208px; height: 20px; border: 1px solid #fafafa; }
.actions { display: flex; justify-content: flex-end; gap: 25px; margin: 14px 17px 0 0; }
.actions .btn { width: 142px; height: 24px; }

/* right side */
.dock { width: 51px; flex: none; border-left: 2px solid #3c3c3c; border-right: 4px solid #3c3c3c; display: flex; flex-direction: column; }
.dock-item { height: 37px; border-bottom: 2px solid #404040; padding: 3px 9px 0 13px; }
.dock-item .icon-btn { margin-top: 6px; }
.panel { width: 302px; flex: none; display: flex; flex-direction: column; }
.panel-tabs { height: 25px; flex: none; background: #424242; display: flex; color: #a4a4a4; }
.panel-tabs button { padding: 0 11px 2px; font: bold 11px/22px "Noto Sans", sans-serif; border-right: 1px solid #3a3a3a; }
.panel-tabs .active { background: #535353; color: #f0f0f0; }
.panel-tabs .burger { margin-left: auto; border: 0; padding: 0 7px; }
.layers { flex: 1; margin: 6px 7px 0; border: 1px solid #5c5c5c; }
.layer-search { display: flex; align-items: center; gap: 13px; padding: 2px 6px 7px; }
.search-box { flex: 1; min-width: 0; height: 22px; border: 1px solid #626262; border-radius: 3px; background: #464646; display: flex; align-items: center; padding-left: 7px; gap: 12px; }
.search-box input { flex: 1; min-width: 0; }
.search-box input::placeholder { color: #5e5e5e; opacity: 1; }
.layer-row { height: 20px; background: #50647b; display: flex; align-items: center; color: #f0f0f0; padding-left: 4px; }
.lock { width: 28px; height: 20px; border-left: 1px solid #475a70; margin-left: 4px; }
.color-bar { width: 4px; height: 17px; background: #4f80ff; }
.chev { margin: 0 15px 0 10px; }
.layer-name { flex: 1; margin-left: 5px; font: bold 11px/14px "Noto Sans", sans-serif; }
.target { margin-right: 17px; }
.corner { align-self: flex-start; }
.layer-foot { flex: none; height: 20px; display: flex; align-items: center; padding: 0 35px 0 7px; justify-content: space-between; }
.layer-foot span { margin-right: 5px; font: bold 11px/14px "Noto Sans", sans-serif; }

/* taskbar */
.taskbar { flex: none; height: 43px; display: flex; justify-content: flex-end; color: #222; background: linear-gradient(90deg, #dcf3bc 0, #e4f3b0 3%, #d6f1c4 7%, #cfedcb 10%, #daf1c0 13%, #d0edcb 19%, #d2eec6 24%, #dcedb2 27%, #d3f0c6 31%, #cfedd0 46%, #cbe9d2 57%, #daf0bc 69%, #e3f3b0 73%, #d6f1c2 77%, #e2f2b2 82%, #d0f0cc 87%, #cae8d4 95%, #d6e4d0 100%); }
.task-center { flex: 1; display: flex; align-items: center; padding-left: 682px; }
.task { width: 48px; height: 37px; margin: 0 5px 0 0; display: flex; align-items: center; justify-content: center; border-radius: 5px; flex: none; position: relative; }
.task.run::after { content: ""; position: absolute; left: 20px; bottom: 0; width: 8px; height: 3px; border-radius: 2px; background: #6c8a70; }
.task.current { background: #ebb0ae; }
.task.current::after { background: #c42b1c; }
.task-search { width: 264px; height: 28px; margin: 0 6px 0 2px; border-radius: 14px; background: #f1faee; border-bottom: 1px solid #c0d4bc; display: flex; align-items: center; padding-left: 13px; gap: 13px; flex: none; }
.task-search input { width: 180px; font-size: 13px; line-height: 18px; }
.task-search input::placeholder { color: #5a625a; opacity: 1; }
.tray { display: flex; align-items: center; padding-right: 22px; font-size: 13px; line-height: 15px; }
.cloud { margin: 0 21px; }
.lang { text-align: center; margin-right: 22px; }
.vol { margin: 0 20px 0 9px; }
.clock { text-align: right; }
```
